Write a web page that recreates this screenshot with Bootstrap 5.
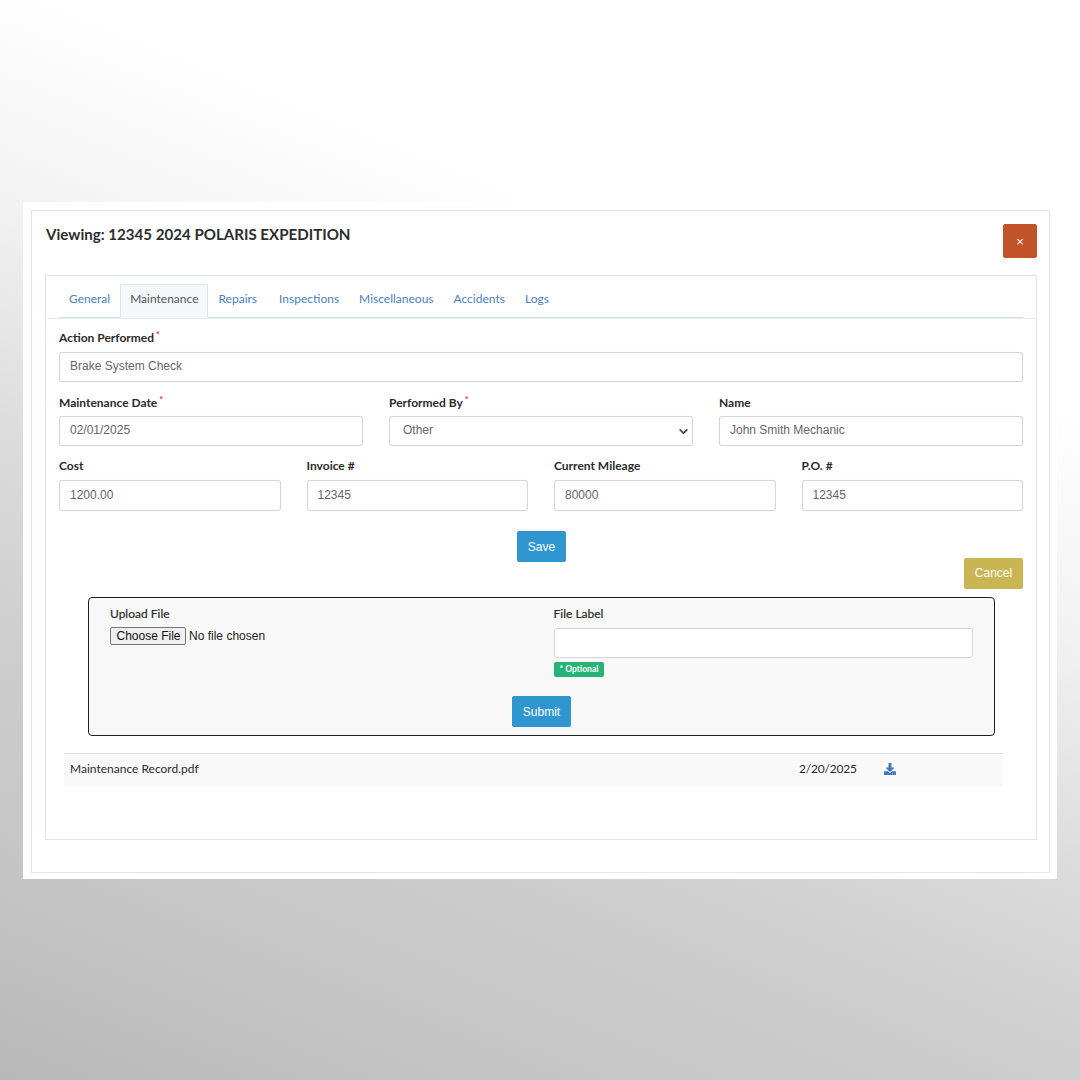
<!DOCTYPE html>
<html lang="en">
<head>
<meta charset="utf-8">
<title>Viewing vehicle</title>
<link rel="stylesheet" href="https://cdn.jsdelivr.net/npm/bootstrap@5.3.0/dist/css/bootstrap.min.css">
<script src="https://cdn.jsdelivr.net/npm/bootstrap@5.3.0/dist/js/bootstrap.bundle.min.js"></script>
<style>
html,body{height:1080px;overflow:hidden}
body{padding:202px 23px 0;background:linear-gradient(22deg,#b8b8b8 0%,#c5c5c5 14%,#cecece 29%,#dcdcdc 43%,#f2f2f2 58%,#fff 72.5%);font-family:"Liberation Sans",Arial,sans-serif;font-size:12px;color:#333}
.frame{background:#fff;height:677px;padding:8px 7px 6px 8px}
.shell{border:1px solid #dde7f0;height:100%;padding:13px 12px 0 13px}
.title-row{height:51px}
.view-title{font:700 15.1px/20px Lato,"Liberation Sans",sans-serif;color:#2d2d2d;margin:0;padding-left:1px}
.close-btn{width:34px;height:34px;padding:0;background:#c05328;border:1px solid #c05328;border-radius:2px;color:#fff;font-size:13px;line-height:1}
.panel{border:1px solid #d9e5ef;height:565px}
.tab-strip{padding:8px 13px 0;border-bottom:1px solid #e3ebf3}
.tab-strip .nav-tabs{border-bottom:1px solid #d5dde6}
.tab-strip .nav-link{font:400 12px/16px Lato,"Liberation Sans",sans-serif;color:#4a7fc1;padding:6px 9px 10px;border-radius:2px 2px 0 0;border:1px solid transparent;margin-bottom:-1px}
.tab-strip .nav-link.active{color:#555;background:#f5f8fb;border-color:#dde5ed #dde5ed #f5f8fb}
.tab-strip .nav-item:nth-child(3) .nav-link{padding-right:11px}
.form-area{padding:11px 13px 0}
.field-row{--bs-gutter-x:26px;--bs-gutter-y:0}
.field-label{font:700 12px/16px Lato,"Liberation Sans",sans-serif;color:#2b2b2b;margin:0 0 6px;display:block}
.gap-a{margin-top:13px}.gap-a .field-label{margin-bottom:5px}.gap-b{margin-top:12px}
.req{color:#d9342b;font-size:9px;position:relative;top:-4px;margin-left:2px;line-height:0}
.field-input.form-control,.field-input.form-select{height:30px;font-size:12px;padding:3px 10px 5px;color:#666;border:1px solid #d6d6d6;border-radius:3px;font-family:"Liberation Sans",Arial,sans-serif;box-shadow:0 0 1px rgba(0,0,0,.1)}
.gap-b .field-input.form-control{height:31px}
.field-input.form-select{padding-left:13px;background-image:url("data:image/svg+xml,%3csvg xmlns='http://www.w3.org/2000/svg' viewBox='0 0 16 16'%3e%3cpath fill='none' stroke='%23444' stroke-linecap='round' stroke-linejoin='round' stroke-width='3' d='m2 5 6 6 6-6'/%3e%3c/svg%3e");background-size:9px 9px;background-position:right 4px center}
.act-btn{font-size:12px;line-height:16px;padding:6px 10px;border-radius:2px;color:#fff;border:1px solid #3096d0;background:#3096d0;height:31px}
.save-line{margin-top:20px;height:31px}
.save-line .act-btn{padding:6px 9.5px;margin-left:1px}
.cancel-line{margin-top:-4px;height:31px}
.cancel-btn{background:#c9b652;border-color:#c9b652;width:59px;padding:5px 0 7px}
.upload-box{margin:8px 41px 0 42px;height:139px;border:1px solid #1f1f1f;border-radius:4px;background:#f8f8f8;padding:8px 21px 0}
.upload-box .field-label{font-weight:400;-webkit-text-stroke:.2px #2b2b2b}
.label-col{margin-left:-1px;width:calc(50% + 1px)}
.file-fake{font-size:12px;line-height:16px;color:#222;display:flex;align-items:center;margin-top:-1px}
.file-btn{background:#efefef;border:1px solid #767676;border-radius:2px;padding:0 4.5px 0 5.5px;height:18px;line-height:16px;margin-right:3px;color:#111}
.label-box.form-control{height:30px;border:1px solid #d6d6d6;border-radius:3px}
.opt-tag{background:#26b376;color:#fff;font:700 8.5px/11px Lato,"Liberation Sans",sans-serif;padding:2px 6px;border-radius:2px;height:15px;display:block;width:max-content;margin-top:4px}
.submit-line{margin-top:19px}
.file-row{margin:17px 33px 0 18px;height:34px;padding-bottom:4px;background:#f9f9f9;border-top:1px solid #e4e4e4;color:#2a2a2a}
.file-name{padding-left:6px;width:735px;font-family:Lato,"Liberation Sans",sans-serif;font-size:12px}
.file-date{width:85px;font-family:Lato,"Liberation Sans",sans-serif;font-size:12px;letter-spacing:-.2px}
.dl-ico{width:12px;height:12px;fill:#4278bd;display:block}
</style>
</head>
<body>
<div class="frame">
  <div class="shell">
    <div class="title-row d-flex justify-content-between align-items-start">
      <h5 class="view-title">Viewing: 12345 2024 POLARIS EXPEDITION</h5>
      <button class="btn close-btn" type="button">×</button>
    </div>
    <div class="panel">
      <div class="tab-strip">
        <ul class="nav nav-tabs">
          <li class="nav-item"><a class="nav-link" href="#">General</a></li>
          <li class="nav-item"><a class="nav-link active" href="#">Maintenance</a></li>
          <li class="nav-item"><a class="nav-link" href="#">Repairs</a></li>
          <li class="nav-item"><a class="nav-link" href="#">Inspections</a></li>
          <li class="nav-item"><a class="nav-link" href="#">Miscellaneous</a></li>
          <li class="nav-item"><a class="nav-link" href="#">Accidents</a></li>
          <li class="nav-item"><a class="nav-link" href="#">Logs</a></li>
        </ul>
      </div>
      <div class="form-area">
        <label class="field-label">Action Performed<span class="req">*</span></label>
        <input class="form-control field-input" value="Brake System Check">
        <div class="row field-row gap-a">
          <div class="col-4"><label class="field-label">Maintenance Date<span class="req">*</span></label><input class="form-control field-input" value="02/01/2025"></div>
          <div class="col-4"><label class="field-label">Performed By<span class="req">*</span></label><select class="form-select field-input"><option>Other</option></select></div>
          <div class="col-4"><label class="field-label">Name</label><input class="form-control field-input" value="John Smith Mechanic"></div>
        </div>
        <div class="row field-row gap-b">
          <div class="col-3"><label class="field-label">Cost</label><input class="form-control field-input" value="1200.00"></div>
          <div class="col-3"><label class="field-label">Invoice #</label><input class="form-control field-input" value="12345"></div>
          <div class="col-3"><label class="field-label">Current Mileage</label><input class="form-control field-input" value="80000"></div>
          <div class="col-3"><label class="field-label">P.O. #</label><input class="form-control field-input" value="12345"></div>
        </div>
        <div class="save-line text-center"><button class="btn act-btn" type="button">Save</button></div>
        <div class="cancel-line text-end"><button class="btn act-btn cancel-btn" type="button">Cancel</button></div>
      </div>
      <div class="upload-box">
        <div class="row field-row">
          <div class="col-6">
            <label class="field-label">Upload File</label>
            <div class="file-fake"><span class="file-btn">Choose File</span><span>No file chosen</span></div>
          </div>
          <div class="col-6 label-col">
            <label class="field-label">File Label</label>
            <input class="form-control label-box">
            <span class="opt-tag">* Optional</span>
          </div>
        </div>
        <div class="submit-line text-center"><button class="btn act-btn" type="button">Submit</button></div>
      </div>
      <div class="file-row d-flex align-items-center">
        <div class="file-name">Maintenance Record.pdf</div>
        <div class="file-date">2/20/2025</div>
        <svg class="dl-ico" viewBox="0 0 512 512" role="img" aria-label="Download"><path d="M216 0h80c13.3 0 24 10.7 24 24v168h87.7c17.8 0 26.7 21.5 14.1 34.1L269.7 378.3c-7.5 7.5-19.8 7.5-27.3 0L90.1 226.1c-12.6-12.6-3.7-34.1 14.1-34.1H192V24c0-13.3 10.7-24 24-24zm296 376v112c0 13.3-10.7 24-24 24H24c-13.3 0-24-10.7-24-24V376c0-13.3 10.7-24 24-24h146.7l49 49c20.1 20.1 52.5 20.1 72.6 0l49-49H488c13.3 0 24 10.7 24 24zm-124 88c0-11-9-20-20-20s-20 9-20 20 9 20 20 20 20-9 20-20zm64 0c0-11-9-20-20-20s-20 9-20 20 9 20 20 20 20-9 20-20z"/></svg>
      </div>
    </div>
  </div>
</div>
</body>
</html>
